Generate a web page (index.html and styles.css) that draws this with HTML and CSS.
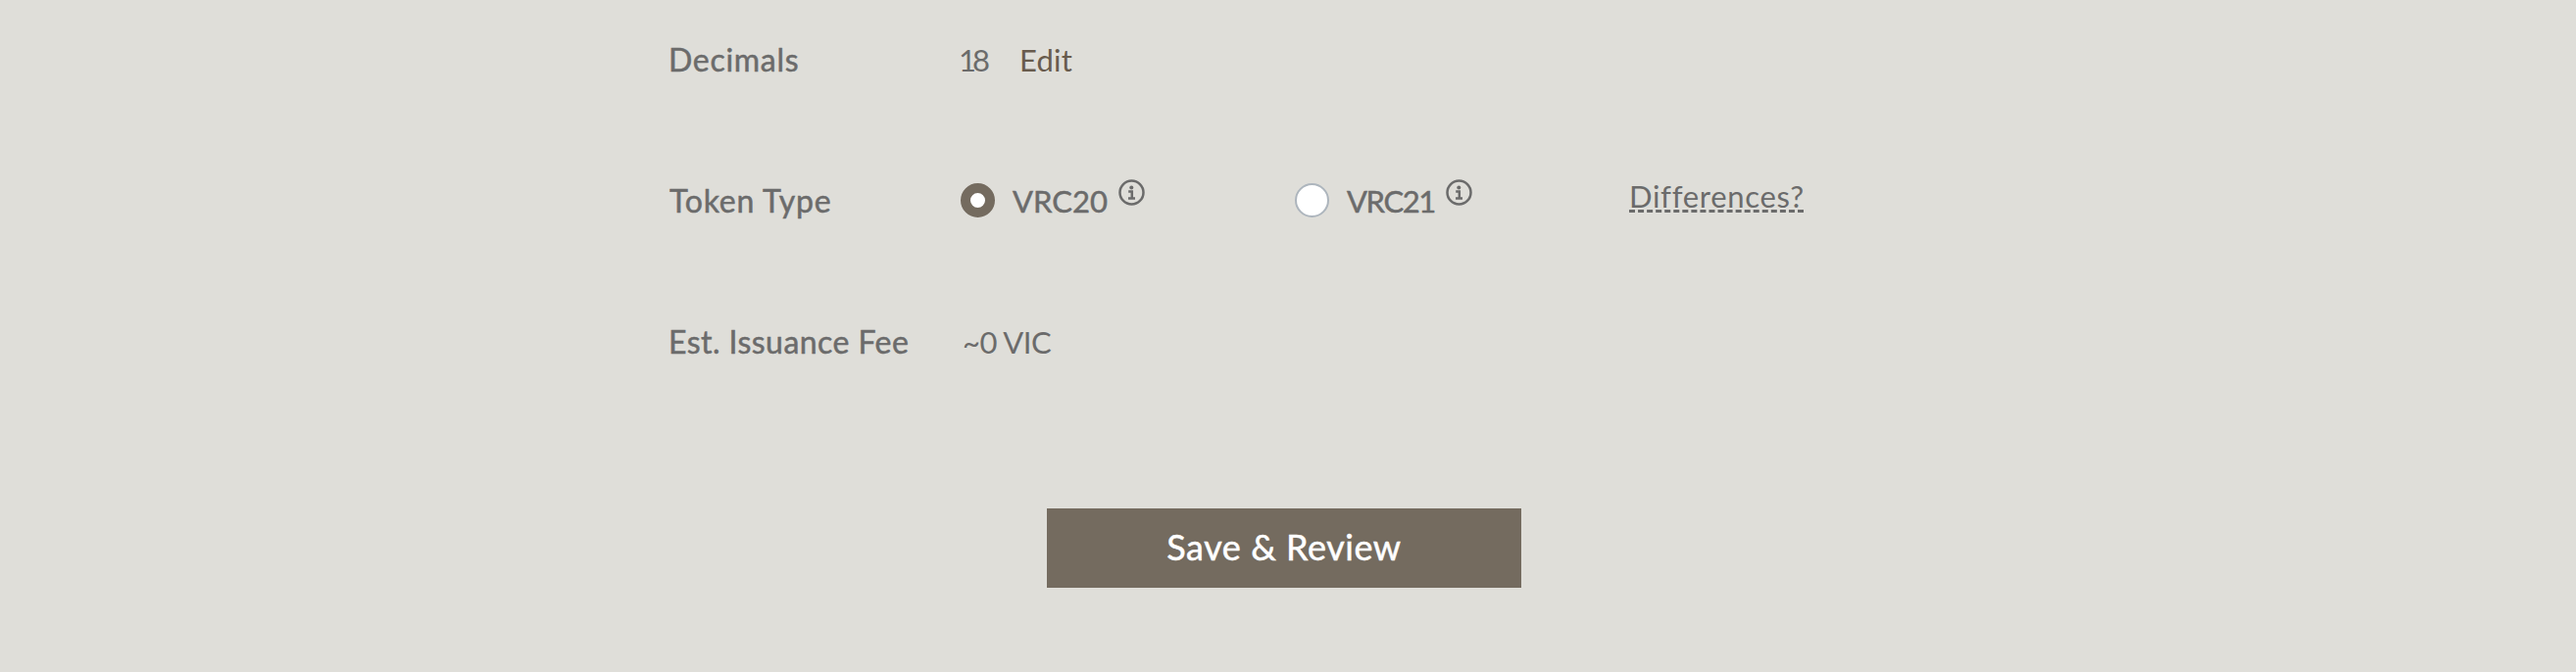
FILE: index.html
```
<!DOCTYPE html>
<html lang="en">
<head>
<meta charset="utf-8">
<title>Issue Token</title>
<link rel="stylesheet" href="styles.css">
</head>
<body>
<main class="form">
  <div class="row">
    <div class="label label-decimals">Decimals</div>
    <span class="decimals">18</span>
    <a class="edit">Edit</a>
  </div>
  <div class="row">
    <div class="label label-type">Token Type</div>
    <div class="option">
      <span class="radio radio-on"></span>
      <span class="name name-vrc20">VRC20</span>
      <svg class="info" viewBox="0 0 27 27"><circle cx="13.5" cy="13.5" r="12" fill="none" stroke="currentColor" stroke-width="2.5"/><circle cx="13.3" cy="8.5" r="2" fill="currentColor"/><path d="M10.2 12.6h3.6v6.6M10 19.4h7" fill="none" stroke="currentColor" stroke-width="2.5"/></svg>
    </div>
    <div class="option">
      <span class="radio"></span>
      <span class="name name-vrc21">VRC21</span>
      <svg class="info" viewBox="0 0 27 27"><circle cx="13.5" cy="13.5" r="12" fill="none" stroke="currentColor" stroke-width="2.5"/><circle cx="13.3" cy="8.5" r="2" fill="currentColor"/><path d="M10.2 12.6h3.6v6.6M10 19.4h7" fill="none" stroke="currentColor" stroke-width="2.5"/></svg>
    </div>
    <a class="diff">Differences?</a>
  </div>
  <div class="row">
    <div class="label label-fee">Est. Issuance Fee</div>
    <span class="fee">~0 VIC</span>
  </div>
  <button class="save">Save &amp; Review</button>
</main>
</body>
</html>
```
FILE: styles.css
```
body {
  margin: 0;
  background: #dfded9;
  color: #6b6b6b;
  font: 400 31px/40px Lato, sans-serif;
}
.form {
  display: flex;
  flex-direction: column;
  gap: 104px;
  padding: 41px 0 0 682px;
}
.row {
  display: flex;
  height: 40px;
  white-space: nowrap;
}
.label {
  width: 298px;
  font-size: 32px;
  -webkit-text-stroke: 0.5px currentColor;
}
.label-decimals { letter-spacing: 0.7px; }
.label-type { padding-left: 1px; width: 297px; letter-spacing: 0.75px; }
.label-fee { width: 299px; letter-spacing: 0.45px; }
.decimals {
  width: 60px;
  margin-left: -2px;
  letter-spacing: -4px;
}
.edit {
  margin-left: 2px;
  color: #685b4d;
  letter-spacing: 0.2px;
}
.option {
  display: flex;
  width: 341px;
}
.radio {
  box-sizing: border-box;
  width: 35px;
  height: 35px;
  margin-top: 2px;
  border: 2px solid #adb5bd;
  border-radius: 50%;
  background: #fff;
}
.radio-on {
  border: 10.5px solid #746b5f;
}
.name {
  width: 108px;
  margin-left: 18px;
  -webkit-text-stroke: 0.5px currentColor;
}
.name-vrc21 { width: 101px; letter-spacing: -1.4px; }
.info {
  width: 27px;
  height: 27px;
  margin-top: -2px;
}
.diff {
  box-sizing: border-box;
  width: 178px;
  height: 37px;
  margin-top: -5px;
  border-bottom: 3px dashed #6b6b6b;
  letter-spacing: 0.7px;
}
.fee { letter-spacing: -0.5px; margin-left: 1px; }
.save {
  width: 484px;
  height: 81px;
  margin: 46px 0 0 386px;
  padding: 0 0 3px;
  border: 0;
  background: #746b5f;
  color: #fff;
  font: 400 36px/40px Lato, sans-serif;
  letter-spacing: 0.55px;
  -webkit-text-stroke: 0.5px currentColor;
}
```
